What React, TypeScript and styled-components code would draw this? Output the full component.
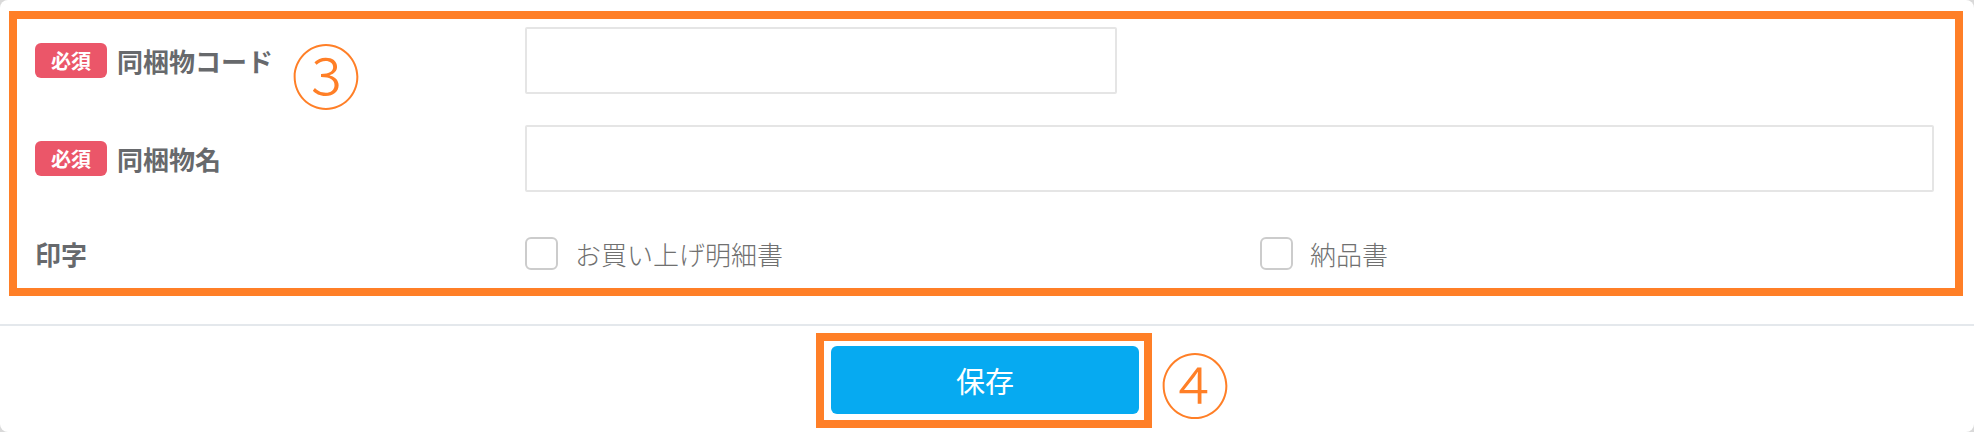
import React from "react";
import styled, { createGlobalStyle } from "styled-components";

const GlobalStyle = createGlobalStyle`
  html, body {
    margin: 0;
    padding: 0;
    background: #d9d9d9;
  }
  body {
    font-family: "Noto Sans CJK JP", "Noto Sans", sans-serif;
  }
  * { box-sizing: border-box; }
`;

const Card = styled.div`
  width: 1974px;
  height: 432px;
  background: #ffffff;
  border-radius: 8px;
  display: flex;
  flex-direction: column;
  overflow: hidden;
`;

const FormSection = styled.section`
  padding: 11px 11px 0 9px;
`;

const Highlight = styled.div`
  position: relative;
  border: 8px solid #ff7f27;
`;

const FormGrid = styled.div`
  display: grid;
  grid-template-columns: 490px 1fr;
  grid-template-rows: 67px 67px 61px;
  row-gap: 31px;
  padding: 8px 21px 4px 18px;
`;

const LabelCell = styled.div`
  display: flex;
  align-items: center;
  gap: 10px;
`;

const Badge = styled.span`
  display: inline-flex;
  align-items: center;
  justify-content: center;
  width: 72px;
  height: 35px;
  border-radius: 6px;
  background: #eb5669;
  color: #ffffff;
  font-size: 20px;
  font-weight: 700;
  line-height: 1;
`;

const LabelText = styled.span`
  color: #67696c;
  font-size: 26px;
  font-weight: 700;
  line-height: 1.3;
`;

const FieldCell = styled.div`
  display: flex;
  align-items: center;
`;

const TextInput = styled.input<{ $width?: number }>`
  width: ${(p) => (p.$width ? `${p.$width}px` : "100%")};
  height: 67px;
  border: 2px solid #e5e5e5;
  border-radius: 2px;
  background: #ffffff;
  outline: none;
  padding: 0 14px;
  font-size: 24px;
  font-family: inherit;
`;

const OptionGrid = styled.div`
  display: grid;
  grid-template-columns: 735px 1fr;
  width: 100%;
  align-items: center;
`;

const Option = styled.label`
  display: flex;
  align-items: center;
  gap: 17px;
  cursor: pointer;
`;

const CheckBox = styled.input`
  appearance: none;
  -webkit-appearance: none;
  margin: 0;
  width: 33px;
  height: 33px;
  border: 2px solid #cccccc;
  border-radius: 6px;
  background: #ffffff;
`;

const OptionText = styled.span`
  color: #707070;
  font-size: 26px;
  font-weight: 300;
  line-height: 1.3;
`;

const Marker = styled.span<{ $left: number; $top: number }>`
  position: absolute;
  left: ${(p) => p.$left}px;
  top: ${(p) => p.$top}px;
  color: #ff7f27;
  font-size: 70px;
  font-weight: 300;
  line-height: 1;
  font-family: "Noto Sans CJK JP", sans-serif;
`;

const Divider = styled.hr`
  margin: 28px 0 0 0;
  border: none;
  height: 2px;
  background: #e4e8ec;
`;

const Footer = styled.footer`
  display: flex;
  justify-content: center;
  padding-top: 7px;
  padding-right: 6px;
`;

const ButtonFrame = styled.div`
  position: relative;
  border: 8px solid #ff7f27;
  padding: 5px 5px 6px 7px;
`;

const SaveButton = styled.button`
  width: 308px;
  height: 68px;
  border: none;
  border-radius: 6px;
  background: #06aaf1;
  color: #ffffff;
  font-family: inherit;
  font-size: 29px;
  font-weight: 400;
  display: flex;
  align-items: center;
  justify-content: center;
  cursor: pointer;
`;

export default function App() {
  return (
    <>
      <GlobalStyle />
      <Card>
        <FormSection>
          <Highlight>
            <FormGrid>
              <LabelCell>
                <Badge>必須</Badge>
                <LabelText>同梱物コード</LabelText>
              </LabelCell>
              <FieldCell>
                <TextInput $width={592} type="text" />
              </FieldCell>

              <LabelCell>
                <Badge>必須</Badge>
                <LabelText>同梱物名</LabelText>
              </LabelCell>
              <FieldCell>
                <TextInput type="text" />
              </FieldCell>

              <LabelCell>
                <LabelText>印字</LabelText>
              </LabelCell>
              <FieldCell>
                <OptionGrid>
                  <Option>
                    <CheckBox type="checkbox" />
                    <OptionText>お買い上げ明細書</OptionText>
                  </Option>
                  <Option>
                    <CheckBox type="checkbox" />
                    <OptionText>納品書</OptionText>
                  </Option>
                </OptionGrid>
              </FieldCell>
            </FormGrid>
            <Marker $left={274} $top={20}>③</Marker>
          </Highlight>
        </FormSection>
        <Divider />
        <Footer>
          <ButtonFrame>
            <SaveButton type="button">保存</SaveButton>
            <Marker $left={336} $top={7}>④</Marker>
          </ButtonFrame>
        </Footer>
      </Card>
    </>
  );
}
